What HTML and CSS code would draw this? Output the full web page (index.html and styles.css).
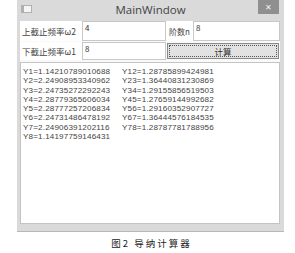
FILE: index.html
```html
<!DOCTYPE html>
<html lang="zh">
<head>
    <meta charset="UTF-8">
    <title>MainWindow</title>
    <link rel="stylesheet" href="styles.css">
</head>
<body>
    <div class="window">
        <div class="title-bar">
            <span class="app-icon"></span>
            <span class="title">MainWindow</span>
            <span class="close-btn">&#x2715;</span>
        </div>
        <div class="client">
            <div class="form">
                <div class="label">上截止频率ω2</div>
                <div class="field">4</div>
                <div class="label label-short">阶数n</div>
                <div class="field">8</div>

                <div class="label">下截止频率ω1</div>
                <div class="field">8</div>
                <div class="button">计算</div>
            </div>

            <div class="output">
                <div class="line"><span class="col">Y1=1.14210789010688</span><span>Y12=1.28785899424981</span></div>
                <div class="line"><span class="col">Y2=2.24908953340962</span><span>Y23=1.36440831230869</span></div>
                <div class="line"><span class="col">Y3=2.24735272292243</span><span>Y34=1.29155856519503</span></div>
                <div class="line"><span class="col">Y4=2.28779365606034</span><span>Y45=1.27659144992682</span></div>
                <div class="line"><span class="col">Y5=2.28777257206834</span><span>Y56=1.29160352907727</span></div>
                <div class="line"><span class="col">Y6=2.24731486478192</span><span>Y67=1.36444576184535</span></div>
                <div class="line"><span class="col">Y7=2.24906391202116</span><span>Y78=1.28787781788956</span></div>
                <div class="line"><span class="col">Y8=1.14197759146431</span></div>
            </div>
        </div>
    </div>

    <p class="caption">图2&nbsp;导纳计算器</p>
</body>
</html>
```

FILE: styles.css
```css
body {
    margin: 0;
    background: #ffffff;
    font-family: "Noto Sans", "Noto Sans CJK SC", sans-serif;
    color: #333;
}

/* Window frame */
.window {
    margin-left: 17px;
    width: 267px;
    height: 232px;
    box-sizing: border-box;
    background: #dadada;
    border-bottom: 1px solid #b8b8b8;
    display: flex;
    flex-direction: column;
}

.title-bar {
    height: 21px;
    display: flex;
    align-items: center;
    position: relative;
}

.app-icon {
    position: absolute;
    left: 4px;
    top: 5px;
    width: 7px;
    height: 6px;
    background: #f4f4f4;
    border: 1px solid #b0b0b0;
    border-left-width: 3px;
}

.title {
    flex: 1;
    text-align: center;
    font-family: "Open Sans", sans-serif;
    font-size: 11.5px;
    color: #444;
    margin-top: -2px;
}

.close-btn {
    position: absolute;
    right: 5px;
    top: 0;
    width: 21px;
    height: 14px;
    background: #8f8f8f;
    color: #f2f2f2;
    font-size: 8px;
    line-height: 14px;
    text-align: center;
}

.client {
    flex: 1;
    margin: 0 4px 7px 3px;
    background: #f9f9f9;
    display: flex;
    flex-direction: column;
}

/* Input rows */
.form {
    display: grid;
    grid-template-columns: 62px 84px 27px 1fr;
    grid-template-rows: 20px 18px;
    row-gap: 1px;
    font-family: "Noto Sans CJK SC", sans-serif;
    font-size: 8.5px;
}

.label {
    background: #ffffff;
    padding-left: 2px;
    display: flex;
    align-items: center;
    color: #444;
    white-space: nowrap;
}

.label-short {
    padding-left: 3px;
    font-size: 8px;
}

.field {
    background: #ffffff;
    border: 1px solid #c8c8c8;
    padding: 0 2px;
    font-size: 8px;
    line-height: 12px;
}

.button {
    grid-column: 3 / 5;
    margin: 1px;
    background: #e2e2e2;
    border: 1px solid #8a8a8a;
    outline: 1px dotted #555;
    outline-offset: -3px;
    display: flex;
    align-items: center;
    justify-content: center;
    font-size: 8.5px;
    color: #333;
}

/* Result text box */
.output {
    flex: 1;
    margin-top: 2px;
    background: #ffffff;
    border: 1px solid #c4c4c4;
    padding: 4px 2px 3px;
    font-family: "Liberation Sans", Arial, sans-serif;
    font-size: 8.1px;
    letter-spacing: 0.15px;
    line-height: 9.3px;
    color: #444;
}

.line {
    display: flex;
    white-space: nowrap;
}

.col {
    width: 99px;
}

.caption {
    margin: 4px 0 0 0;
    text-align: center;
    padding-left: 8px;
    font-family: "Noto Sans CJK SC", sans-serif;
    font-size: 9.5px;
    font-weight: 400;
    letter-spacing: 2px;
    color: #222;
}
```
